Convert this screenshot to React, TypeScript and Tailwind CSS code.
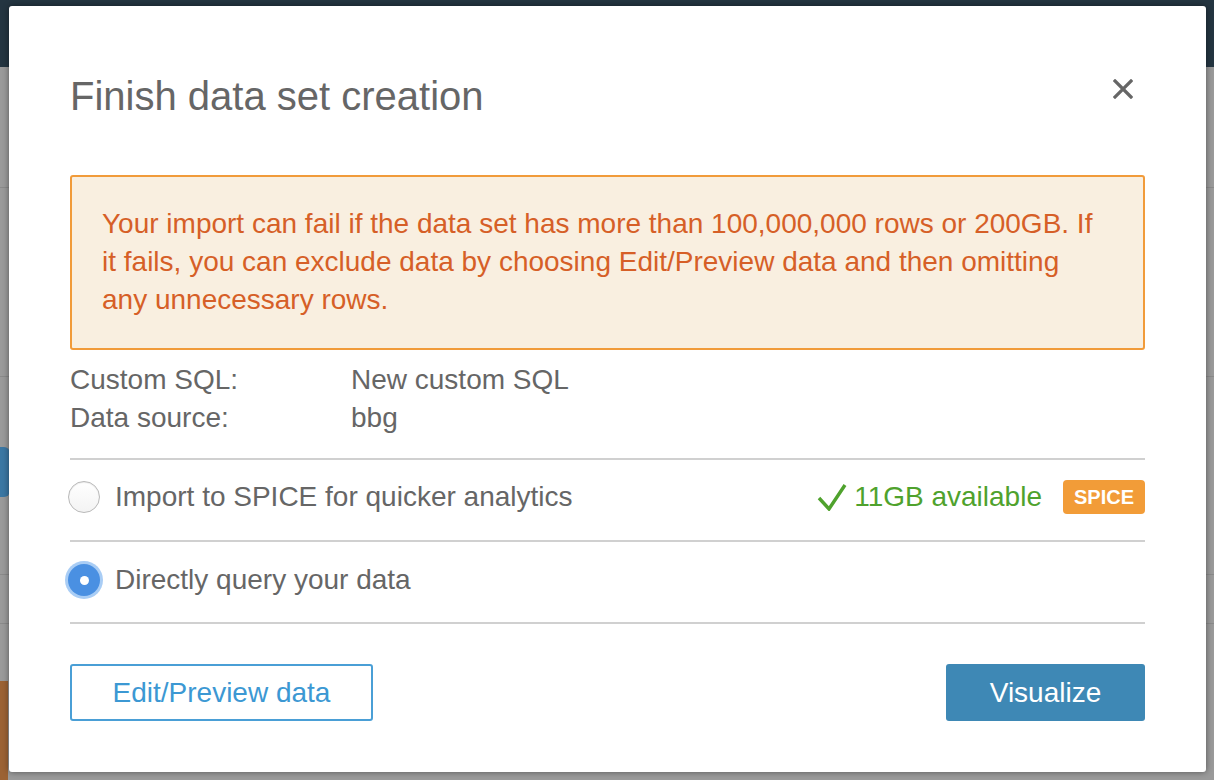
import React from "react";

function CloseIcon() {
  return (
    <svg width="20" height="20" viewBox="0 0 20 20" className="block">
      <path d="M2 2 L18 18 M18 2 L2 18" stroke="#666666" strokeWidth="3.2" strokeLinecap="square" />
    </svg>
  );
}

function CheckIcon() {
  return (
    <svg width="30" height="28" viewBox="0 0 30 28" className="block">
      <path d="M2 15 L12 26 L28 2" fill="none" stroke="#4fa22d" strokeWidth="3.4" strokeLinejoin="miter" />
    </svg>
  );
}

function Radio({ checked }: { checked?: boolean }) {
  if (checked) {
    return (
      <span className="flex h-[32px] w-[32px] shrink-0 items-center justify-center rounded-full bg-[#4a90e2] shadow-[0_0_0_3px_#a9cdf5]">
        <span className="block h-[9px] w-[9px] rounded-full bg-white" />
      </span>
    );
  }
  return (
    <span className="block h-[32px] w-[32px] shrink-0 rounded-full border border-[#b9b9b9] bg-gradient-to-b from-white to-[#f3f3f3] shadow-[inset_0_1px_1px_rgba(0,0,0,0.08)]" />
  );
}

export default function App() {
  return (
    <div className="relative h-[780px] w-[1214px] overflow-hidden bg-[#9a9a9a] font-['Liberation_Sans',Arial,sans-serif]">
      {/* page behind the overlay */}
      <div className="h-[67px] bg-[#243541]" />
      <div className="h-[121px] border-b border-[#8a8a8a]" />
      <div className="h-[189px] border-b border-[#8a8a8a]" />
      <div className="relative h-[198px] border-b border-[#8a8a8a]">
        <div className="absolute left-[-20px] top-[70px] h-[50px] w-[30px] rounded-md bg-[#3b77a3]" />
      </div>
      <div className="h-[49px] border-b border-[#8a8a8a]" />
      <div className="relative h-[160px]">
        <div className="absolute left-[-10px] top-[57px] h-[110px] w-[18px] bg-[#9b6234]" />
      </div>

      {/* modal */}
      <div className="absolute left-[9px] top-[6px] flex h-[766px] w-[1197px] flex-col rounded-[3px] bg-white px-[61px] pt-[70px] shadow-[0_0_6px_rgba(0,0,0,0.45)]">
        <div className="flex items-start justify-between">
          <h1 className="text-[40px] leading-[40px] text-[#666666]">Finish data set creation</h1>
          <button className="mr-[12px] mt-[3px]" aria-label="Close">
            <CloseIcon />
          </button>
        </div>

        <div className="mt-[59px] rounded-[3px] border-2 border-[#f19b3a] bg-[#f9efe0] pb-[29px] pl-[30px] pr-[40px] pt-[28px] text-[28px] leading-[38px] text-[#d65f27]">
          Your import can fail if the data set has more than 100,000,000 rows or 200GB. If it fails, you can exclude data by choosing Edit/Preview data and then omitting any unnecessary rows.
        </div>

        <div className="mt-[11px] grid grid-cols-[281px_1fr] text-[28px] leading-[38px] text-[#666666]">
          <div>Custom SQL:</div>
          <div>New custom SQL</div>
          <div>Data source:</div>
          <div>bbg</div>
        </div>

        <div className="mt-[21px] border-t-2 border-[#d0d0d0]" />
        <div className="flex h-[80px] items-center pb-[6px]">
          <div className="ml-[-2px]">
            <Radio />
          </div>
          <span className="ml-[15px] text-[28px] text-[#666666]">Import to SPICE for quicker analytics</span>
          <div className="ml-auto flex items-center">
            <CheckIcon />
            <span className="ml-[7px] text-[28px] text-[#4fa22d]">11GB available</span>
            <span className="ml-[21px] rounded-[4px] bg-[#f29c38] px-[11px] py-[6px] text-[20px] font-bold leading-[22px] text-white">SPICE</span>
          </div>
        </div>
        <div className="border-t-2 border-[#d0d0d0]" />
        <div className="flex h-[80px] items-center pb-[4px]">
          <div className="ml-[-2px]">
            <Radio checked />
          </div>
          <span className="ml-[15px] text-[28px] text-[#666666]">Directly query your data</span>
        </div>
        <div className="border-t-2 border-[#d0d0d0]" />

        <div className="mt-[40px] flex items-center justify-between">
          <button className="h-[57px] w-[303px] rounded-[3px] border-2 border-[#4a9fd6] bg-white text-[28px] text-[#3c98d3]">
            Edit/Preview data
          </button>
          <button className="h-[57px] w-[199px] rounded-[3px] bg-[#3e88b5] text-[28px] text-white">
            Visualize
          </button>
        </div>
      </div>
    </div>
  );
}
